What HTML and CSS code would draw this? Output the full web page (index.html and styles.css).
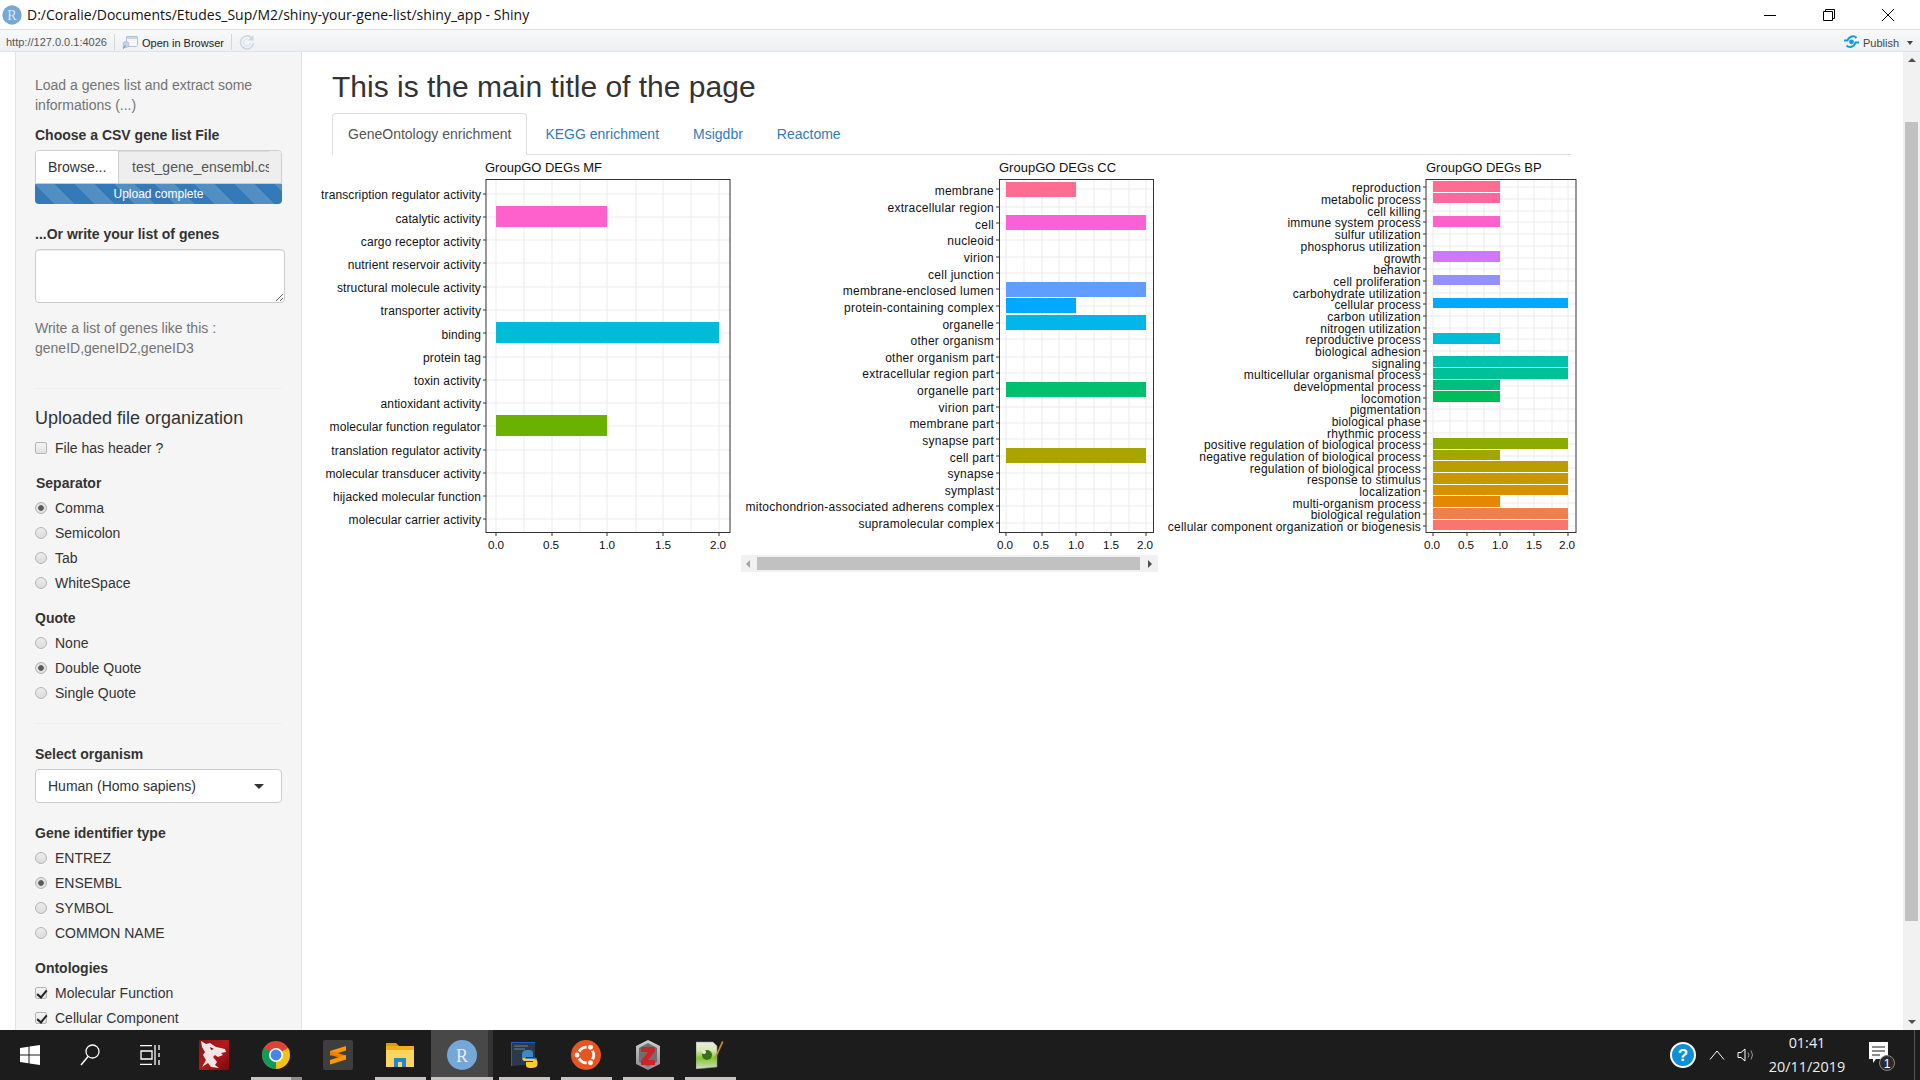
FILE: index.html
```html
<!DOCTYPE html>
<html lang="en">
<head>
<meta charset="utf-8">
<title>shiny_app - Shiny</title>
<link rel="stylesheet" href="styles.css">
</head>
<body>
<header class="titlebar">
  <svg class="r-logo" width="20" height="20" viewBox="0 0 20 20"><circle cx="10" cy="10" r="9.7" fill="#75a8d8"/><text x="10" y="14.5" class="r-letter">R</text></svg>
  <span class="title-text">D:/Coralie/Documents/Etudes_Sup/M2/shiny-your-gene-list/shiny_app - Shiny</span>
  <div class="win-controls">
    <svg width="14" height="14" viewBox="0 0 14 14"><path d="M1 7.5H13" stroke="#000" fill="none"/></svg>
    <svg width="14" height="14" viewBox="0 0 14 14"><path d="M1.5 3.5H10.5V12.5H1.5ZM3.5 3.5V1.5H12.5V10.5H10.5" stroke="#000" fill="none"/></svg>
    <svg width="14" height="14" viewBox="0 0 14 14"><path d="M1 1L13 13M13 1L1 13" stroke="#000" fill="none"/></svg>
  </div>
</header>
<div class="toolbar">
  <span class="url">http://127.0.0.1:4026</span>
  <span class="tb-sep"></span>
  <svg class="browser-ico" width="16" height="14" viewBox="0 0 16 14"><path d="M5 1.5H15C15.500 1.500 15.500 2 15.500 2.500V10.500C15.500 11 15 11.500 14.500 11.500H4.500V2C4.500 1.700 4.700 1.500 5 1.500Z" fill="#f4f7fa" stroke="#b4c2d0"/><path d="M5 2H15V4H5Z" fill="#c9d6e4"/><circle cx="4" cy="9.500" r="3" fill="#c6d5e5" stroke="#9db1c6" stroke-width=".6"/><path d="M1 13.500L3.500 10.500" stroke="#8b9eb3" stroke-width="1.500" fill="none"/></svg>
  <span class="open-browser">Open in Browser</span>
  <span class="tb-sep"></span>
  <svg class="refresh-ico" width="16" height="16" viewBox="0 0 16 16"><path d="M12.800 4A6.500 6.500 0 1 0 14.500 9" fill="none" stroke="#cbd7e0" stroke-width="1.600"/><path d="M9.500 5.300A3.500 3.500 0 1 0 11.500 9" fill="none" stroke="#dbe3e9" stroke-width="1.200"/><path d="M14.500 .8V6.500H9Z" fill="#cbd7e0"/></svg>
  <span class="publish">
    <svg width="17" height="14" viewBox="0 0 17 14"><path d="M1 5.500H4.500C6 1 11 0 13.500 3" fill="none" stroke="#149bd9" stroke-width="2"/><path d="M16 7.500H12.500C11 12.500 6 13 3.500 10.500" fill="none" stroke="#149bd9" stroke-width="2"/><circle cx="8.500" cy="6.800" r="2.400" fill="#149bd9"/></svg>
    <span class="publish-text">Publish</span>
    <span class="caret-small"></span>
  </span>
</div>

<div class="workspace">
  <main class="page">
    <aside class="sidebar">
      <p class="help help-first">Load a genes list and extract some informations (...)</p>
      <label class="label gap-10">Choose a CSV gene list File</label>
      <div class="file-input">
        <span class="browse">Browse...</span>
        <span class="file-name">test_gene_ensembl.csv</span>
      </div>
      <div class="progress">Upload complete</div>
      <label class="label gap-20">...Or write your list of genes</label>
      <textarea class="genes-area"></textarea>
      <p class="help gap-15">Write a list of genes like this :<br>geneID,geneID2,geneID3</p>
      <hr class="rule gap-30">
      <h4 class="subhead">Uploaded file organization</h4>
      <label class="opt gap-10"><input type="checkbox">File has header ?</label>

      <label class="label gap-15 nudge">Separator</label>
      <label class="opt"><input type="radio" name="sep" checked>Comma</label>
      <label class="opt"><input type="radio" name="sep">Semicolon</label>
      <label class="opt"><input type="radio" name="sep">Tab</label>
      <label class="opt"><input type="radio" name="sep">WhiteSpace</label>

      <label class="label gap-15">Quote</label>
      <label class="opt"><input type="radio" name="quote">None</label>
      <label class="opt"><input type="radio" name="quote" checked>Double Quote</label>
      <label class="opt"><input type="radio" name="quote">Single Quote</label>

      <hr class="rule gap-20">
      <label class="label gap-20">Select organism</label>
      <div class="select-box"><span>Human (Homo sapiens)</span><span class="select-caret"></span></div>

      <label class="label gap-20">Gene identifier type</label>
      <label class="opt"><input type="radio" name="gid">ENTREZ</label>
      <label class="opt"><input type="radio" name="gid" checked>ENSEMBL</label>
      <label class="opt"><input type="radio" name="gid">SYMBOL</label>
      <label class="opt"><input type="radio" name="gid">COMMON NAME</label>

      <label class="label gap-15">Ontologies</label>
      <label class="opt"><input type="checkbox" checked>Molecular Function</label>
      <label class="opt"><input type="checkbox" checked>Cellular Component</label>
    </aside>

    <section class="content">
      <h1 class="main-title">This is the main title of the page</h1>
      <nav class="tabs">
        <a class="tab active">GeneOntology enrichment</a>
        <a class="tab">KEGG enrichment</a>
        <a class="tab">Msigdbr</a>
        <a class="tab">Reactome</a>
      </nav>
      <div class="plots">
        <svg class="plot plot-mf" width="409" height="420" viewBox="332 155 409 420">
          <text class="plot-title" x="485" y="167.500">GroupGO DEGs MF</text>
          <path class="grid" d="M524 179V532M580 179V532M636 179V532M691 179V532M496 179V532M552 179V532M607 179V532M663 179V532M719 179V532M486 194H730M486 217H730M486 240H730M486 263H730M486 287H730M486 310H730M486 333H730M486 357H730M486 380H730M486 403H730M486 426H730M486 450H730M486 473H730M486 496H730M486 519H730"/>
          <rect x="496" y="206" width="111" height="21" fill="#FF61CC"/>
          <rect x="496" y="322" width="223" height="21" fill="#00BCD8"/>
          <rect x="496" y="415" width="111" height="21" fill="#6BB100"/>
          <rect class="panel" x="486" y="179.500" width="244" height="353"/>
          <path class="tick" d="M483 194H486M483 217H486M483 240H486M483 263H486M483 287H486M483 310H486M483 333H486M483 357H486M483 380H486M483 403H486M483 426H486M483 450H486M483 473H486M483 496H486M483 519H486M496 533V536M552 533V536M607 533V536M663 533V536M719 533V536"/>
          <g class="ylab">
            <text x="481" y="195">transcription regulator activity</text>
            <text x="481" y="219">catalytic activity</text>
            <text x="481" y="242">cargo receptor activity</text>
            <text x="481" y="265">nutrient reservoir activity</text>
            <text x="481" y="288">structural molecule activity</text>
            <text x="481" y="311">transporter activity</text>
            <text x="481" y="335">binding</text>
            <text x="481" y="358">protein tag</text>
            <text x="481" y="381">toxin activity</text>
            <text x="481" y="404">antioxidant activity</text>
            <text x="481" y="427">molecular function regulator</text>
            <text x="481" y="451">translation regulator activity</text>
            <text x="481" y="474">molecular transducer activity</text>
            <text x="481" y="497">hijacked molecular function</text>
            <text x="481" y="520">molecular carrier activity</text>
          </g>
          <g class="xlab">
            <text x="496" y="544">0.0</text><text x="551" y="544">0.5</text><text x="607" y="544">1.0</text><text x="663" y="544">1.5</text><text x="718" y="544">2.0</text>
          </g>
        </svg>

        <div class="plot-scroll">
          <svg class="plot plot-cc" width="417" height="400" viewBox="741 155 417 400">
            <text class="plot-title" x="999" y="167.500">GroupGO DEGs CC</text>
            <path class="grid" d="M1024 179V532M1059 179V532M1094 179V532M1129 179V532M1006 179V532M1042 179V532M1076 179V532M1111 179V532M1146 179V532M999 189H1153M999 207H1153M999 223H1153M999 240H1153M999 257H1153M999 273H1153M999 289H1153M999 306H1153M999 323H1153M999 339H1153M999 357H1153M999 373H1153M999 389H1153M999 407H1153M999 423H1153M999 439H1153M999 456H1153M999 473H1153M999 489H1153M999 506H1153M999 523H1153"/>
            <rect x="1006" y="182" width="70" height="15" fill="#FF6C91"/>
            <rect x="1006" y="215" width="140" height="15" fill="#FB61D7"/>
            <rect x="1006" y="282" width="140" height="15" fill="#619CFF"/>
            <rect x="1006" y="298" width="70" height="15" fill="#00A9FF"/>
            <rect x="1006" y="315" width="140" height="15" fill="#00B6EB"/>
            <rect x="1006" y="382" width="140" height="15" fill="#00BF6F"/>
            <rect x="1006" y="448" width="140" height="15" fill="#A9A400"/>
            <rect class="panel" x="999.500" y="179.500" width="154" height="353"/>
            <path class="tick" d="M996 189H999M996 207H999M996 223H999M996 240H999M996 257H999M996 273H999M996 289H999M996 306H999M996 323H999M996 339H999M996 357H999M996 373H999M996 389H999M996 407H999M996 423H999M996 439H999M996 456H999M996 473H999M996 489H999M996 506H999M996 523H999M1006 533V536M1042 533V536M1076 533V536M1111 533V536M1146 533V536"/>
            <g class="ylab">
              <text x="994" y="191">membrane</text>
              <text x="994" y="208">extracellular region</text>
              <text x="994" y="225">cell</text>
              <text x="994" y="241">nucleoid</text>
              <text x="994" y="258">virion</text>
              <text x="994" y="275">cell junction</text>
              <text x="994" y="291">membrane-enclosed lumen</text>
              <text x="994" y="308">protein-containing complex</text>
              <text x="994" y="325">organelle</text>
              <text x="994" y="341">other organism</text>
              <text x="994" y="358">other organism part</text>
              <text x="994" y="374">extracellular region part</text>
              <text x="994" y="391">organelle part</text>
              <text x="994" y="408">virion part</text>
              <text x="994" y="424">membrane part</text>
              <text x="994" y="441">synapse part</text>
              <text x="994" y="458">cell part</text>
              <text x="994" y="474">synapse</text>
              <text x="994" y="491">symplast</text>
              <text x="994" y="507">mitochondrion-associated adherens complex</text>
              <text x="994" y="524">supramolecular complex</text>
            </g>
            <g class="xlab">
              <text x="1005" y="544">0.0</text><text x="1041" y="544">0.5</text><text x="1076" y="544">1.0</text><text x="1111" y="544">1.5</text><text x="1145" y="544">2.0</text>
            </g>
          </svg>
          <div class="hscroll">
            <span class="arrow-left"></span>
            <span class="hthumb"></span>
            <span class="arrow-right"></span>
          </div>
        </div>

        <svg class="plot plot-bp" width="432" height="420" viewBox="1158 155 432 420">
          <text class="plot-title" x="1426" y="167.500">GroupGO DEGs BP</text>
          <path class="grid" d="M1450 179V532M1484 179V532M1518 179V532M1552 179V532M1433 179V532M1467 179V532M1500 179V532M1534 179V532M1568 179V532M1426 187H1576M1426 199H1576M1426 211H1576M1426 222H1576M1426 234H1576M1426 246H1576M1426 258H1576M1426 269H1576M1426 281H1576M1426 293H1576M1426 304H1576M1426 316H1576M1426 328H1576M1426 339H1576M1426 351H1576M1426 363H1576M1426 374H1576M1426 386H1576M1426 398H1576M1426 409H1576M1426 421H1576M1426 433H1576M1426 444H1576M1426 456H1576M1426 468H1576M1426 479H1576M1426 491H1576M1426 503H1576M1426 514H1576M1426 526H1576"/>
          <rect x="1433" y="181" width="67" height="11" fill="#FF6C91"/>
          <rect x="1433" y="193" width="67" height="10" fill="#FF689F"/>
          <rect x="1433" y="216" width="67" height="11" fill="#FF61CC"/>
          <rect x="1433" y="251" width="67" height="11" fill="#CF78FF"/>
          <rect x="1433" y="275" width="67" height="10" fill="#9590FF"/>
          <rect x="1433" y="298" width="135" height="10" fill="#00A9FF"/>
          <rect x="1433" y="333" width="67" height="11" fill="#00BCD8"/>
          <rect x="1433" y="356" width="135" height="11" fill="#00C0AF"/>
          <rect x="1433" y="368" width="135" height="11" fill="#00C097"/>
          <rect x="1433" y="380" width="67" height="10" fill="#00BF7D"/>
          <rect x="1433" y="391" width="67" height="11" fill="#00BD5C"/>
          <rect x="1433" y="438" width="135" height="11" fill="#8CAB00"/>
          <rect x="1433" y="450" width="67" height="10" fill="#A3A500"/>
          <rect x="1433" y="461" width="135" height="11" fill="#B79F00"/>
          <rect x="1433" y="473" width="135" height="11" fill="#C49A00"/>
          <rect x="1433" y="485" width="135" height="10" fill="#D89000"/>
          <rect x="1433" y="496" width="67" height="11" fill="#E58700"/>
          <rect x="1433" y="508" width="135" height="11" fill="#F07F4A"/>
          <rect x="1433" y="520" width="135" height="10" fill="#F8766D"/>
          <rect class="panel" x="1426" y="179.500" width="150" height="353"/>
          <path class="tick" d="M1423 187H1426M1423 199H1426M1423 211H1426M1423 222H1426M1423 234H1426M1423 246H1426M1423 258H1426M1423 269H1426M1423 281H1426M1423 293H1426M1423 304H1426M1423 316H1426M1423 328H1426M1423 339H1426M1423 351H1426M1423 363H1426M1423 374H1426M1423 386H1426M1423 398H1426M1423 409H1426M1423 421H1426M1423 433H1426M1423 444H1426M1423 456H1426M1423 468H1426M1423 479H1426M1423 491H1426M1423 503H1426M1423 514H1426M1423 526H1426M1433 533V536M1467 533V536M1500 533V536M1534 533V536M1568 533V536"/>
          <g class="ylab">
            <text x="1421" y="188">reproduction</text>
            <text x="1421" y="200">metabolic process</text>
            <text x="1421" y="212">cell killing</text>
            <text x="1421" y="223">immune system process</text>
            <text x="1421" y="235">sulfur utilization</text>
            <text x="1421" y="247">phosphorus utilization</text>
            <text x="1421" y="259">growth</text>
            <text x="1421" y="270">behavior</text>
            <text x="1421" y="282">cell proliferation</text>
            <text x="1421" y="294">carbohydrate utilization</text>
            <text x="1421" y="305">cellular process</text>
            <text x="1421" y="317">carbon utilization</text>
            <text x="1421" y="329">nitrogen utilization</text>
            <text x="1421" y="340">reproductive process</text>
            <text x="1421" y="352">biological adhesion</text>
            <text x="1421" y="364">signaling</text>
            <text x="1421" y="375">multicellular organismal process</text>
            <text x="1421" y="387">developmental process</text>
            <text x="1421" y="399">locomotion</text>
            <text x="1421" y="410">pigmentation</text>
            <text x="1421" y="422">biological phase</text>
            <text x="1421" y="434">rhythmic process</text>
            <text x="1421" y="445">positive regulation of biological process</text>
            <text x="1421" y="457">negative regulation of biological process</text>
            <text x="1421" y="469">regulation of biological process</text>
            <text x="1421" y="480">response to stimulus</text>
            <text x="1421" y="492">localization</text>
            <text x="1421" y="504">multi-organism process</text>
            <text x="1421" y="515">biological regulation</text>
            <text x="1421" y="527">cellular component organization or biogenesis</text>
          </g>
          <g class="xlab">
            <text x="1432" y="544">0.0</text><text x="1466" y="544">0.5</text><text x="1500" y="544">1.0</text><text x="1534" y="544">1.5</text><text x="1567" y="544">2.0</text>
          </g>
        </svg>
      </div>
    </section>
  </main>
  <div class="vscroll">
    <span class="arrow-up"></span>
    <span class="vthumb"></span>
    <span class="arrow-down"></span>
  </div>
</div>

<footer class="taskbar">
  <div class="tb-start">
    <svg width="20" height="20" viewBox="0 0 20 20"><path d="M0 3L8.500 1.800V9.500H0ZM9.500 1.600L20 0V9.500H9.500ZM0 10.500H8.500V18.200L0 17ZM9.500 10.500H20V20L9.500 18.400Z" fill="#fff"/></svg>
  </div>
  <div class="tb-start">
    <svg width="20" height="22" viewBox="0 0 20 22"><circle cx="12.500" cy="7.500" r="6.500" fill="none" stroke="#fff" stroke-width="1.300"/><path d="M8 12.500L1 21" stroke="#fff" stroke-width="1.500" fill="none"/></svg>
  </div>
  <div class="tb-start tb-start-last">
    <svg width="20" height="20" viewBox="0 0 20 20"><path d="M0 .5H12M0 19.500H12M1 6H12V14H1ZM15 0V20M19 0V5M19 8V12M19 15V20" fill="none" stroke="#fff" stroke-width="1.300"/></svg>
  </div>
  <div class="tb-app">
    <svg width="30" height="30" viewBox="0 0 30 30"><defs><linearGradient id="wolf-bg" x1="0" y1="0" x2="1" y2="1"><stop offset="0" stop-color="#8f1416"/><stop offset=".5" stop-color="#b5181b"/><stop offset="1" stop-color="#7a0a0c"/></linearGradient></defs><rect width="30" height="30" rx="1" fill="url(#wolf-bg)"/><path d="M2 1L7 4L11 3L17 7L26 9L27 12L22 13L24 15L19 17L16 15L14 17L18 22L16 25L20 28L12 27L9 23L3 27L7 20L4 15L6 12L3 7Z" fill="#f1e6e6"/><path d="M11 7L15 9L12 10Z" fill="#7a0a0c"/></svg>
  </div>
  <div class="tb-app open split">
    <svg width="30" height="30" viewBox="0 0 30 30"><circle cx="15" cy="15" r="14" fill="#db4437"/><path d="M15 15L27.100 8A14 14 0 0 1 15 29Z" fill="#f4c20d"/><path d="M15 15L15 29A14 14 0 0 1 2.900 8Z" fill="#0f9d58"/><circle cx="15" cy="15" r="7" fill="#fff"/><circle cx="15" cy="15" r="5.400" fill="#4285f4"/></svg>
  </div>
  <div class="tb-app">
    <svg width="30" height="30" viewBox="0 0 30 30"><rect width="30" height="30" rx="2" fill="#3e3e3e"/><path d="M23 6V10.500L7 15.500V11Z" fill="#ff9800"/><path d="M7 11L23 15.500V19.500L7 15Z" fill="#f57c00"/><path d="M23 15V19.500L7 24.500V20Z" fill="#ff9800"/></svg>
  </div>
  <div class="tb-app open">
    <svg width="28" height="24" viewBox="0 0 28 24"><path d="M0 0H10L13 3H0Z" fill="#e39a00"/><rect y="3" width="28" height="21" fill="#fdd466"/><rect y="3" width="28" height="4" fill="#f3ae12"/><path d="M8 24V15H20V24H16V19H12V24Z" fill="#1e88d2"/></svg>
  </div>
  <div class="tb-app active">
    <svg width="30" height="30" viewBox="0 0 30 30"><circle cx="15" cy="15" r="15" fill="#75a8d8"/><text x="15" y="21.500" class="r-big">R</text></svg>
  </div>
  <div class="tb-app open">
    <svg width="27" height="26" viewBox="0 0 27 26"><path d="M0 0H24V22L0 24Z" fill="#2b3a4a"/><path d="M0 0H24M0 0V24" stroke="#1f5fbf" stroke-width="2" fill="none"/><path d="M3 4H17M3 7H14" stroke="#71808e" stroke-width="1"/><path d="M17 8C21 8 22 9 22 11V15H15V16H25C26.500 16 26 18 25.500 20H22V18H15C12.500 18 11 17 11 15V13C11 9 13 8 17 8Z" fill="#3f86c4"/><path d="M20 26C16 26 15 25 15 23V20H22V19H14C12 19 11 18 11.500 16H14V17H22C25 17 26.500 18 26.500 20V22C26.500 25 24 26 20 26Z" fill="#f4cd3a"/></svg>
  </div>
  <div class="tb-app open">
    <svg width="30" height="30" viewBox="0 0 30 30"><circle cx="15" cy="15" r="15" fill="#e95420"/><circle cx="15" cy="15" r="7.800" fill="none" stroke="#fff" stroke-width="2.800"/><g fill="#fff" stroke="#e95420" stroke-width="1.500"><circle cx="6" cy="15" r="3.200"/><circle cx="19.500" cy="7.200" r="3.200"/><circle cx="19.500" cy="22.800" r="3.200"/></g></svg>
  </div>
  <div class="tb-app open">
    <svg width="26" height="30" viewBox="0 0 26 30"><defs><linearGradient id="zot" x1="0" y1="0" x2="0" y2="1"><stop offset="0" stop-color="#cfcfcf"/><stop offset="1" stop-color="#8a8a8a"/></linearGradient></defs><path d="M13 0L25 6V24L13 30L1 24V6Z" fill="url(#zot)"/><path d="M13 3L22 8V22L13 27L4 22V8Z" fill="#6f6f6f"/><path d="M6 7H20V11.500L13 20H20V25H6V20.500L13 12H6Z" fill="#c9252b"/></svg>
  </div>
  <div class="tb-app open">
    <svg width="28" height="28" viewBox="0 0 28 28"><defs><linearGradient id="npp" x1="0" y1="0" x2="0" y2="1"><stop offset="0" stop-color="#e9ede4"/><stop offset=".3" stop-color="#d9e9b4"/><stop offset=".6" stop-color="#7fc82e"/><stop offset="1" stop-color="#d5dcc9"/></linearGradient></defs><path d="M0 1H17L21 5V26L0 28Z" fill="url(#npp)" stroke="#8c8c8c" stroke-width=".6"/><circle cx="11" cy="14" r="5" fill="#3c6f1d"/><circle cx="8" cy="11" r="2" fill="#e6efd0"/><path d="M26 0L27.500 1L20 17L18 18Z" fill="#c88a1e"/></svg>
  </div>

  <div class="tray">
    <svg class="help-ico" width="26" height="26" viewBox="0 0 26 26"><circle cx="13" cy="13" r="12" fill="#0f8fd4" stroke="#fff" stroke-width="2"/><text x="13" y="19" class="help-q">?</text></svg>
    <svg class="chev" width="16" height="10" viewBox="0 0 16 10"><path d="M1 9.500L8 1L15 9.500" fill="none" stroke="#fff"/></svg>
    <svg class="speaker" width="20" height="18" viewBox="0 0 20 18"><path d="M1 6.500H4L8 3V15L4 11.500H1Z" fill="none" stroke="#fff"/><path d="M11 6.500Q13 9 11 11.500M14 4.500Q17 9 14 13.500" fill="none" stroke="#999"/></svg>
    <div class="clock"><span>01:41</span><span>20/11/2019</span></div>
    <div class="notif">
      <svg width="30" height="32" viewBox="0 0 30 32"><path d="M3 3H22V20H10L7 24V20H3Z" fill="#fff"/><path d="M6 8H19M6 12H19M6 16H14" stroke="#1c1c1c" stroke-width="1.200"/><circle cx="21" cy="24" r="7.500" fill="#2a2a2a" stroke="#888"/><text x="21" y="28.500" class="notif-num">1</text></svg>
    </div>
    <span class="show-desktop"></span>
  </div>
</footer>
</body>
</html>
```
FILE: styles.css
```css
* { box-sizing: border-box; }
html, body { margin: 0; height: 100%; }
body {
  display: flex;
  flex-direction: column;
  height: 100vh;
  overflow: hidden;
  background: #fff;
  color: #333;
  font-family: "Liberation Sans", Arial, sans-serif;
  font-size: 14px;
  line-height: 20px;
}

/* window chrome */
.titlebar {
  flex: none;
  height: 30px;
  display: flex;
  align-items: center;
  padding-left: 2px;
  background: #fff;
  border-bottom: 1px solid #dcdcdc;
}
.r-logo { margin-right: 5px; }
.r-letter { font: 14px "Liberation Serif", serif; fill: #dfeaf5; text-anchor: middle; }
.title-text { font: 14px "Open Sans", sans-serif; color: #111; }
.win-controls {
  margin-left: auto;
  display: flex;
  gap: 45px;
  padding-right: 25px;
}
.toolbar {
  flex: none;
  height: 22px;
  display: flex;
  align-items: center;
  padding: 3px 0 0 6px;
  background: linear-gradient(#f8f9fa, #eef0f2);
  border-bottom: 1px solid #e2e2e2;
  font-size: 11px;
  line-height: 14px;
}
.url { color: #555; width: 101px; white-space: nowrap; }
.tb-sep { width: 1px; height: 16px; background: #d4d6d8; margin: 0 7px; }
.browser-ico { margin: 0 4px 0 0; }
.open-browser {
  color: #222;
  width: 81px;
  margin-right: 1px;
  padding-top: 2px;
  white-space: nowrap;
}
.publish {
  margin-left: auto;
  display: flex;
  align-items: center;
  padding-right: 7px;
  color: #444;
}
.publish-text { margin: 0 8px 0 3px; padding-top: 2px; }
.caret-small {
  width: 0; height: 0;
  margin-top: 1px;
  border: 3.500px solid transparent;
  border-top: 4px solid #444;
  border-bottom: 0;
}

/* scrolled page */
.workspace { flex: 1; min-height: 0; display: flex; }
.page { flex: 1; min-width: 0; display: flex; overflow: hidden; }
.sidebar {
  flex: none;
  width: 287px;
  margin-left: 15px;
  padding: 23px 19px 0;
  background: #f5f5f5;
  border: 1px solid #e3e3e3;
  border-width: 0 1px;
  overflow: hidden;
}
.help { margin: 0; color: #737373; }
.label { display: block; font-weight: 700; margin-bottom: 5px; }
.nudge { padding-left: 1px; }
.gap-10 { margin-top: 10px; }
.gap-15 { margin-top: 15px; }
.gap-20 { margin-top: 20px; }
.gap-30 { margin-top: 30px; }

.file-input {
  display: flex;
  width: 247px;
  height: 34px;
  border: 1px solid #ccc;
  border-radius: 4px 4px 0 0;
  overflow: hidden;
}
.browse {
  flex: none;
  width: 83px;
  padding: 6px 12px;
  background: #fff;
  border-right: 1px solid #ccc;
}
.file-name {
  flex: 1;
  min-width: 0;
  padding: 6px 0 6px 13px;
  background: #eee;
  border-right: 12px solid #eee;
  box-shadow: inset 0 1px 1px rgba(0,0,0,.075);
  white-space: nowrap;
  overflow: hidden;
  color: #555;
}
.progress {
  width: 247px;
  height: 20px;
  border-radius: 0 0 4px 4px;
  background-color: #337ab7;
  background-image: linear-gradient(45deg, rgba(255,255,255,.15) 25%, transparent 25%, transparent 50%, rgba(255,255,255,.15) 50%, rgba(255,255,255,.15) 75%, transparent 75%, transparent);
  background-size: 40px 40px;
  color: #fff;
  font-size: 12px;
  line-height: 20px;
  text-align: center;
}
.genes-area {
  display: block;
  width: 250px;
  height: 54px;
  margin: 0;
  padding: 6px 12px;
  background: #fff;
  border: 1px solid #ccc;
  border-radius: 4px;
  box-shadow: inset 0 1px 1px rgba(0,0,0,.075);
  outline: none;
}
.rule {
  width: 247px;
  height: 1px;
  margin-bottom: 0;
  margin-left: 0;
  margin-right: 0;
  border: 0;
  background: #eee;
}
.subhead {
  margin: 19px 0 0;
  font-size: 18px;
  font-weight: 400;
  line-height: 20px;
  color: #333;
}
.opt {
  display: flex;
  align-items: center;
  height: 20px;
  margin-bottom: 5px;
  color: #333;
}
.opt:has(+ .label), .opt:last-child { margin-bottom: 0; }
.opt:has(+ .rule) { margin-bottom: 0; }
.opt input {
  appearance: none;
  -webkit-appearance: none;
  flex: none;
  position: relative;
  width: 12px;
  height: 12px;
  margin: 0 8px 0 0;
  background: linear-gradient(#ececec, #dcdcdc);
  border: 1px solid #b4b4b4;
  box-shadow: 0 1px 0 rgba(255,255,255,.6);
}
.opt input[type=radio] { border-radius: 50%; }
.opt input[type=radio]:checked { background: radial-gradient(circle, #5a5a5a 0 2.400px, #e2e2e2 3.200px); }
.opt input[type=checkbox] { border-radius: 2px; background: linear-gradient(#f4f4f4, #e2e2e2); }
.opt input[type=checkbox]:checked::after {
  content: "";
  position: absolute;
  left: 3px;
  top: 0;
  width: 4px;
  height: 8px;
  border: solid #222;
  border-width: 0 2px 2px 0;
  transform: rotate(40deg);
}
.select-box {
  display: flex;
  align-items: center;
  justify-content: space-between;
  width: 247px;
  height: 34px;
  padding: 0 17px 0 12px;
  background: #fff;
  border: 1px solid #ccc;
  border-radius: 4px;
}
.select-caret {
  width: 0; height: 0;
  border: 5px solid transparent;
  border-top: 5px solid #333;
  border-bottom: 0;
}

/* main column */
.content { flex: 1; min-width: 0; padding: 18px 0 0 30px; }
.main-title {
  margin: 0 0 10px;
  font-size: 30px;
  font-weight: 500;
  line-height: 33px;
  color: #333;
}
.tabs {
  display: flex;
  width: 1239px;
  height: 42px;
  border-bottom: 1px solid #ddd;
}
.tab {
  height: 42px;
  margin-right: 2px;
  padding: 10px 15px;
  border: 1px solid transparent;
  border-radius: 4px 4px 0 0;
  color: #337ab7;
}
.tab.active {
  color: #555;
  background: #fff;
  border-color: #ddd #ddd #fff;
}
.plots { display: flex; align-items: flex-start; }
.plot { display: block; overflow: visible; }
.plot text { font-family: "Liberation Sans", Arial, sans-serif; }
.plot-title { font-size: 13px; dominant-baseline: central; fill: #111; }
.grid { stroke: #ebebeb; stroke-width: 1; fill: none; }
.panel { fill: none; stroke: #333; stroke-width: 1; }
.tick { stroke: #333; stroke-width: 1; fill: none; }
.ylab text { font-size: 12px; letter-spacing: .2px; text-anchor: end; dominant-baseline: central; fill: #111; }
.plot-mf .ylab text { letter-spacing: .12px; }
.plot-cc .ylab text { letter-spacing: .25px; }
.xlab text { font-size: 11.700px; text-anchor: middle; dominant-baseline: central; fill: #111; }
.plot-scroll { flex: none; width: 417px; }
.hscroll {
  display: flex;
  align-items: center;
  height: 17px;
  background: #f1f1f1;
}
.arrow-left {
  width: 0; height: 0;
  margin: 0 7px 0 5px;
  border: 4px solid transparent;
  border-right: 4px solid #a3a3a3;
  border-left: 0;
}
.hthumb { width: 383px; height: 13px; margin-right: 6px; background: #c1c1c1; }
.arrow-right {
  width: 0; height: 0;
  border: 4px solid transparent;
  border-left: 4px solid #505050;
  border-right: 0;
  margin-left: 2px;
}
.vscroll {
  flex: none;
  width: 17px;
  display: flex;
  flex-direction: column;
  align-items: center;
  background: #f1f1f1;
}
.arrow-up {
  width: 0; height: 0;
  margin-top: 6px;
  border: 4px solid transparent;
  border-bottom: 4px solid #505050;
  border-top: 0;
}
.vthumb { width: 13px; height: 799px; margin-top: 60px; background: #c1c1c1; }
.arrow-down {
  width: 0; height: 0;
  margin-top: auto;
  margin-bottom: 6px;
  border: 4px solid transparent;
  border-top: 4px solid #505050;
  border-bottom: 0;
}

/* taskbar */
.taskbar {
  flex: none;
  height: 50px;
  display: flex;
  align-items: stretch;
  background: #1c1c1c;
  color: #fff;
}
.tb-start {
  width: 60px;
  display: flex;
  align-items: center;
  justify-content: center;
}
.tb-start-last { width: 63px; padding-right: 4px; }
.tb-app {
  width: 62px;
  display: flex;
  align-items: center;
  justify-content: center;
}
.tb-app.open {
  background: linear-gradient(#c8c4c4, #c8c4c4) center bottom / 51px 3px no-repeat;
}
.tb-app.split {
  background: linear-gradient(90deg, #c8c4c4 0 40px, #8f8c8c 40px) center bottom / 51px 3px no-repeat;
}
.tb-app.active {
  background: linear-gradient(#c8c4c4, #c8c4c4) center bottom / 100% 3px no-repeat, linear-gradient(90deg, #484848 0 57px, #333 57px);
}
.r-big { font: 18px "Liberation Serif", serif; fill: #e4eef8; text-anchor: middle; }
.tray {
  margin-left: auto;
  display: flex;
  align-items: center;
}
.help-ico { margin-right: 13px; }
.help-q { font: 700 17px "Liberation Sans", sans-serif; fill: #fff; text-anchor: middle; }
.chev { margin-right: 12px; }
.speaker { margin-right: 10px; }
.clock {
  width: 80px;
  display: flex;
  flex-direction: column;
  align-items: center;
  gap: 4px;
  margin-right: 19px;
  font: 14.400px/20px "Open Sans", sans-serif;
  color: #eee;
}
.notif { width: 30px; margin-right: 18px; display: flex; }
.notif-num { font: 12px "Liberation Sans", sans-serif; fill: #fff; text-anchor: middle; }
.show-desktop { flex: none; width: 1px; height: 100%; margin-right: 5px; background: #555; }
```
